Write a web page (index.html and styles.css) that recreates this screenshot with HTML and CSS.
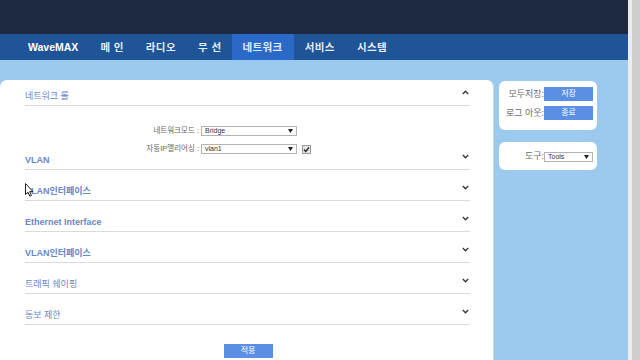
FILE: index.html
```html
<!DOCTYPE html>
<html lang="ko">
<head>
<meta charset="utf-8">
<title>WaveMAX</title>
<link rel="stylesheet" href="styles.css">
</head>
<body>
<div class="screen">
  <div class="page">
    <div class="topband"></div>
    <nav class="nav">
      <span class="nav-item brand">WaveMAX</span>
      <span class="nav-item">메 인</span>
      <span class="nav-item">라디오</span>
      <span class="nav-item">무 선</span>
      <span class="nav-item active">네트워크</span>
      <span class="nav-item">서비스</span>
      <span class="nav-item">시스템</span>
    </nav>
    <div class="content">
      <main class="main">
        <div class="sec-head first">
          <span class="title">네트워크 롤</span>
          <svg class="chev" width="7" height="5" viewBox="0 0 7 5"><polyline points="0.8,4 3.5,1.2 6.2,4" fill="none" stroke="#333" stroke-width="1.3"/></svg>
        </div>
        <div class="form">
          <span class="label">네트워크모드 :</span>
          <div class="select"><span>Bridge</span><svg width="5" height="4" viewBox="0 0 5 4"><polygon points="0,0 5,0 2.5,4" fill="#222"/></svg></div>
          <span></span>
          <span class="label">자동IP앨리어싱 :</span>
          <div class="select"><span>vlan1</span><svg width="5" height="4" viewBox="0 0 5 4"><polygon points="0,0 5,0 2.5,4" fill="#222"/></svg></div>
          <span class="check"><svg width="7" height="7" viewBox="0 0 7 7"><polyline points="1,3.6 2.8,5.4 6,1.4" fill="none" stroke="#222" stroke-width="1.4"/></svg></span>
        </div>
        <div class="sec-head short">
          <span class="title bold">VLAN</span>
          <svg class="chev" width="7" height="5" viewBox="0 0 7 5"><polyline points="0.8,1 3.5,3.8 6.2,1" fill="none" stroke="#333" stroke-width="1.3"/></svg>
        </div>
        <div class="sec-head">
          <span class="title bold">VLAN인터페이스</span>
          <svg class="chev" width="7" height="5" viewBox="0 0 7 5"><polyline points="0.8,1 3.5,3.8 6.2,1" fill="none" stroke="#333" stroke-width="1.3"/></svg>
        </div>
        <div class="sec-head">
          <span class="title bold">Ethernet Interface</span>
          <svg class="chev" width="7" height="5" viewBox="0 0 7 5"><polyline points="0.8,1 3.5,3.8 6.2,1" fill="none" stroke="#333" stroke-width="1.3"/></svg>
        </div>
        <div class="sec-head">
          <span class="title bold">VLAN인터페이스</span>
          <svg class="chev" width="7" height="5" viewBox="0 0 7 5"><polyline points="0.8,1 3.5,3.8 6.2,1" fill="none" stroke="#333" stroke-width="1.3"/></svg>
        </div>
        <div class="sec-head">
          <span class="title">트래픽 쉐이핑</span>
          <svg class="chev" width="7" height="5" viewBox="0 0 7 5"><polyline points="0.8,1 3.5,3.8 6.2,1" fill="none" stroke="#333" stroke-width="1.3"/></svg>
        </div>
        <div class="sec-head">
          <span class="title">동보 제한</span>
          <svg class="chev" width="7" height="5" viewBox="0 0 7 5"><polyline points="0.8,1 3.5,3.8 6.2,1" fill="none" stroke="#333" stroke-width="1.3"/></svg>
        </div>
        <div class="actions"><button class="btn apply">적용</button></div>
        <svg class="cursor" width="9" height="14" viewBox="0 0 9 14"><path d="M0.5,0.5 L0.5,11.5 L3,9.2 L4.8,13.2 L6.4,12.5 L4.7,8.6 L8,8.6 Z" fill="#fff" stroke="#222" stroke-width="1"/></svg>
      </main>
      <aside class="side">
        <div class="card account">
          <span class="side-label">모두저장:</span>
          <button class="btn">저장</button>
          <span class="side-label">로그 아웃:</span>
          <button class="btn">종료</button>
        </div>
        <div class="card tools">
          <span class="side-label">도구:</span>
          <div class="select small"><span>Tools</span><svg width="5" height="4" viewBox="0 0 5 4"><polygon points="0,0 5,0 2.5,4" fill="#222"/></svg></div>
        </div>
      </aside>
    </div>
  </div>
  <div class="scrollbar"></div>
</div>
</body>
</html>
```
FILE: styles.css
```css
html, body {
  margin: 0;
  padding: 0;
}
body {
  font-family: "Liberation Sans", "Noto Sans CJK KR", sans-serif;
  width: 640px;
  height: 360px;
  overflow: hidden;
}
.screen {
  display: flex;
  width: 640px;
  height: 360px;
}
.page {
  width: 628px;
  display: flex;
  flex-direction: column;
}
.topband {
  height: 35px;
  background: #1c2940;
}
.nav {
  height: 26px;
  background: #1f5496;
  display: flex;
  align-items: stretch;
  padding-left: 17px;
}
.nav-item {
  display: flex;
  align-items: center;
  padding: 0 11px;
  color: #e4ecfa;
  font-size: 10.5px;
  font-weight: bold;
  letter-spacing: 0.4px;
  line-height: 12px;
}
.nav-item.brand {
  color: #fff;
  font-size: 10.5px;
  letter-spacing: 0;
}
.nav-item.active {
  background: #2a69c8;
  padding: 0 11px 0 10px;
}
.content {
  flex: 1;
  background: #9cc9ee;
  display: flex;
  align-items: flex-start;
  padding-top: 20px;
}
.main {
  position: relative;
  width: 445px;
  height: 280px;
  background: #fff;
  border-right: 1px solid #c3d8ec;
  border-radius: 7px 7px 0 0;
  padding: 0 23px 0 25px;
}
.sec-head {
  height: 31px;
  box-sizing: border-box;
  border-bottom: 1px solid #dadada;
  display: flex;
  justify-content: space-between;
  align-items: flex-end;
  padding-bottom: 3px;
}
.sec-head.first {
  height: 26px;
}
.sec-head.short {
  height: 16px;
}
.title {
  font-size: 9px;
  line-height: 11px;
  color: #6a86c6;
}
.title.bold {
  font-weight: bold;
}
.chev {
  align-self: flex-start;
  margin-top: auto;
  margin-bottom: 7px;
  margin-right: 1px;
}
.form {
  display: grid;
  grid-template-columns: 175px 96px 10px;
  column-gap: 1px;
  row-gap: 8px;
  align-items: center;
  padding-top: 20px;
}
.label {
  text-align: right;
  font-size: 7.5px;
  line-height: 10px;
  color: #666;
  padding-right: 1px;
}
.select {
  height: 10px;
  box-sizing: border-box;
  border: 1px solid #b3b3b3;
  display: flex;
  align-items: center;
  justify-content: space-between;
  padding: 0 3px 0 3px;
  font-size: 7px;
  line-height: 8px;
  color: #333;
  background: #fff;
}
.check {
  width: 7px;
  height: 7px;
  margin-left: 4px;
  border: 1px solid #999;
  background: #e4e4e4;
  display: flex;
  align-items: center;
  justify-content: center;
}
.actions {
  display: flex;
  justify-content: center;
  padding-top: 19px;
  padding-left: 1px;
}
.btn {
  width: 49px;
  height: 14px;
  border: 0;
  padding: 0;
  background: #5b8fe4;
  color: #fff;
  font-family: "Liberation Sans", "Noto Sans CJK KR", sans-serif;
  font-size: 8px;
  line-height: 14px;
}
.cursor {
  position: absolute;
  left: 25px;
  top: 103px;
}
.side {
  width: 98px;
  margin-left: 5px;
  margin-top: 1px;
  display: flex;
  flex-direction: column;
  gap: 12px;
}
.card {
  background: #fff;
  border-radius: 6px;
  box-sizing: border-box;
}
.card.account {
  height: 49px;
  display: grid;
  grid-template-columns: 45px 49px;
  row-gap: 5px;
  align-items: center;
  padding: 6px 4px 0 0;
  align-content: start;
}
.card.tools {
  height: 28px;
  display: grid;
  grid-template-columns: 45px 49px;
  align-items: center;
  padding: 9px 4px 0 0;
  align-content: start;
}
.side-label {
  text-align: right;
  font-size: 9px;
  line-height: 11px;
  color: #6b6b6b;
}
.select.small {
  height: 10px;
}
.scrollbar {
  width: 12px;
  height: 360px;
  background: #cdcdcd;
  border-left: 4px solid #ececec;
  box-sizing: border-box;
}
```
